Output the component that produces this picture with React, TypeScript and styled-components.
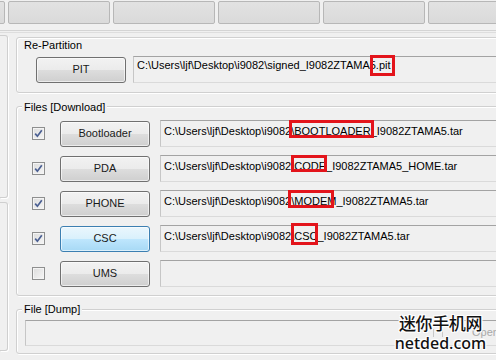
import React from 'react';
import styled, { createGlobalStyle } from 'styled-components';

const GlobalStyle = createGlobalStyle`
  html, body {
    margin: 0;
    padding: 0;
    background: #f0f0f0;
  }
  body {
    font-family: "Liberation Sans", Arial, sans-serif;
  }
`;

const Page = styled.div`
  position: relative;
  width: 496px;
  height: 360px;
  overflow: hidden;
  background: #f0f0f0;
  font-family: "Liberation Sans", Arial, sans-serif;
  font-size: 11px;
  line-height: 13px;
  color: #000;
`;

const TabStrip = styled.div`
  display: flex;
  gap: 3px;
  margin-left: -97px;
  padding-top: 1px;
`;

const Tab = styled.div`
  flex: 0 0 102px;
  height: 23px;
  box-sizing: border-box;
  border: 1px solid #b7b7b7;
  border-radius: 2px;
  background: linear-gradient(#e2e2e2, #dadada);
`;

const Divider = styled.div`
  margin-top: 6px;
  height: 1px;
  border-top: 1px solid #d4d4d4;
  border-bottom: 1px solid #dedede;
`;

const Body = styled.div`
  display: flex;
  align-items: flex-start;
  margin-top: 2px;
`;

const Rail = styled.div`
  flex: 0 0 8px;
  display: flex;
  flex-direction: column;
  gap: 4px;
`;

const RailBox = styled.div<{ $h: number }>`
  height: ${p => p.$h}px;
  box-sizing: border-box;
  border: 1px solid #cfcfcf;
  border-left: none;
  border-radius: 0 3px 3px 0;
  box-shadow: 1px 1px 0 #fff;
`;

const Main = styled.div`
  flex: 0 0 560px;
  margin-left: 8px;
  display: flex;
  flex-direction: column;
`;

const Group = styled.div<{ $mt: number; $pad: string }>`
  position: relative;
  margin-top: ${p => p.$mt}px;
  padding: ${p => p.$pad};
  border: 1px solid #d0d0d0;
  border-radius: 3px;
  box-shadow: 1px 1px 0 #fff, inset 1px 1px 0 #fff;
`;

const Legend = styled.span<{ $top: number }>`
  position: absolute;
  left: 5px;
  top: ${p => p.$top}px;
  padding: 0 2px;
  background: #f0f0f0;
  white-space: nowrap;
`;

const Row = styled.div`
  display: flex;
  align-items: center;
  height: 27px;
`;

const Rows = styled.div`
  display: flex;
  flex-direction: column;
  gap: 8px;
`;

const Check = styled.span`
  flex: 0 0 13px;
  height: 13px;
  margin-right: 15px;
  box-sizing: border-box;
  border: 1px solid #8e8f8f;
  background: linear-gradient(135deg, #dcdcdc, #f6f6f6);
  box-shadow: inset 0 0 0 1px #f4f4f4;
  display: flex;
  align-items: center;
  justify-content: center;
`;

const Button = styled.div<{ $active?: boolean; $gap: number }>`
  flex: 0 0 90px;
  height: 26px;
  margin-right: ${p => p.$gap}px;
  box-sizing: border-box;
  border: 1px solid ${p => (p.$active ? '#3c7fb1' : '#707070')};
  border-radius: 3px;
  background: ${p =>
    p.$active
      ? 'linear-gradient(#eaf6fd 0%, #d9f0fc 50%, #bee6fd 51%, #a7d9f5 100%)'
      : 'linear-gradient(#f2f2f2 0%, #ebebeb 50%, #dddddd 51%, #cfcfcf 100%)'};
  box-shadow: inset 0 0 0 1px rgba(255, 255, 255, 0.6);
  display: flex;
  align-items: center;
  justify-content: center;
  color: #1a1a1a;
`;

const Field = styled.div<{ $h: number; $padTop: number }>`
  flex: 1 1 auto;
  height: ${p => p.$h}px;
  box-sizing: border-box;
  padding: ${p => p.$padTop}px 3px 0;
  border: 1px solid;
  border-color: #a3a3a3 #c6c6c6 #dadada #c6c6c6;
  background: #f0f0f0;
  white-space: nowrap;
`;

const DumpField = styled(Field)`
  display: flex;
  align-items: flex-start;
  padding-left: 407px;
  color: #a9a9a9;
`;

const Ticks = styled.span`
  flex: 0 0 10px;
  height: 8px;
  margin-top: 3px;
  box-sizing: border-box;
  border-left: 1px solid #c8c8c8;
  border-right: 1px solid #c8c8c8;
`;

const Faint = styled.span`
  margin-left: 29px;
`;

type Box = { t: number; b: number; l: number; r: number };

const Mark = styled.span<{ $box: Box }>`
  position: relative;
  &::after {
    content: '';
    position: absolute;
    top: ${p => p.$box.t}px;
    bottom: ${p => p.$box.b}px;
    left: ${p => p.$box.l}px;
    right: ${p => p.$box.r}px;
    border: 3px solid #e3141b;
  }
`;

const Watermark = styled.div`
  position: absolute;
  left: 390px;
  top: 312px;
  width: 101px;
  display: flex;
  flex-direction: column;
  align-items: center;
  color: #111;
  text-shadow: 1px 1px 0 #fff, -1px -1px 0 #fff, 1px -1px 0 #fff, -1px 1px 0 #fff, 0 0 3px #fff;
`;

const WatermarkCn = styled.span`
  font-family: "Noto Sans CJK SC", "Noto Sans", sans-serif;
  font-size: 17px;
  line-height: 22px;
  font-weight: 500;
  letter-spacing: -0.4px;
`;

const WatermarkEn = styled.span`
  font-family: "Noto Sans", "DejaVu Sans", sans-serif;
  font-size: 16px;
  line-height: 18px;
  font-weight: 500;
`;

const CheckMark = () => (
  <svg width="9" height="9" viewBox="0 0 9 9">
    <path d="M1.2 4.6 L3.4 7.2 L7.8 1.2" fill="none" stroke="#4a5f92" strokeWidth="1.7" />
  </svg>
);

const base = 'C:\\Users\\ljf\\Desktop\\i9082';

type FileRow = {
  label: string;
  checked: boolean;
  active?: boolean;
  mark?: string;
  rest?: string;
  box?: Box;
};

const files: FileRow[] = [
  { label: 'Bootloader', checked: true, mark: '\\BOOTLOADER', rest: '_I9082ZTAMA5.tar', box: { t: -5, b: -1, l: -2, r: -3 } },
  { label: 'PDA', checked: true, mark: '\\CODE', rest: '_I9082ZTAMA5_HOME.tar', box: { t: -5, b: 0, l: 0, r: -1 } },
  { label: 'PHONE', checked: true, mark: '\\MODEM', rest: '_I9082ZTAMA5.tar', box: { t: -5, b: -1, l: -3, r: 2 } },
  { label: 'CSC', checked: true, active: true, mark: '\\CSC', rest: '_I9082ZTAMA5.tar', box: { t: -7, b: -3, l: 0, r: -1 } },
  { label: 'UMS', checked: false },
];

export default function App() {
  return (
    <Page>
      <GlobalStyle />
      <TabStrip>
        {[0, 1, 2, 3, 4, 5].map(i => (
          <Tab key={i} />
        ))}
      </TabStrip>
      <Divider />
      <Body>
        <Rail>
          <RailBox $h={163} />
          <RailBox $h={149} />
        </Rail>
        <Main>
          <Group $mt={2} $pad="18px 0 9px 19px">
            <Legend $top={1}>Re-Partition</Legend>
            <Row>
              <Button $gap={7}>PIT</Button>
              <Field $h={27} $padTop={2}>
                {base}\signed_I9082ZTAMA
                <Mark $box={{ t: -4, b: -5, l: 0, r: -4 }}>5.pit</Mark>
              </Field>
            </Row>
          </Group>

          <Group $mt={13} $pad="13px 0 8px 15px">
            <Legend $top={-6}>Files [Download]</Legend>
            <Rows>
              {files.map(f => (
                <Row key={f.label}>
                  <Check>{f.checked && <CheckMark />}</Check>
                  <Button $gap={10} $active={f.active}>
                    {f.label}
                  </Button>
                  <Field $h={27} $padTop={4}>
                    {f.mark && (
                      <>
                        {base}
                        <Mark $box={f.box!}>{f.mark}</Mark>
                        {f.rest}
                      </>
                    )}
                  </Field>
                </Row>
              ))}
            </Rows>
          </Group>

          <Group $mt={13} $pad="10px 0 7px 8px">
            <Legend $top={-7}>File [Dump]</Legend>
            <DumpField $h={26} $padTop={5}>
              <Ticks />
              <Faint>Open</Faint>
            </DumpField>
          </Group>
        </Main>
      </Body>
      <Watermark>
        <WatermarkCn>迷你手机网</WatermarkCn>
        <WatermarkEn>netded.com</WatermarkEn>
      </Watermark>
    </Page>
  );
}
